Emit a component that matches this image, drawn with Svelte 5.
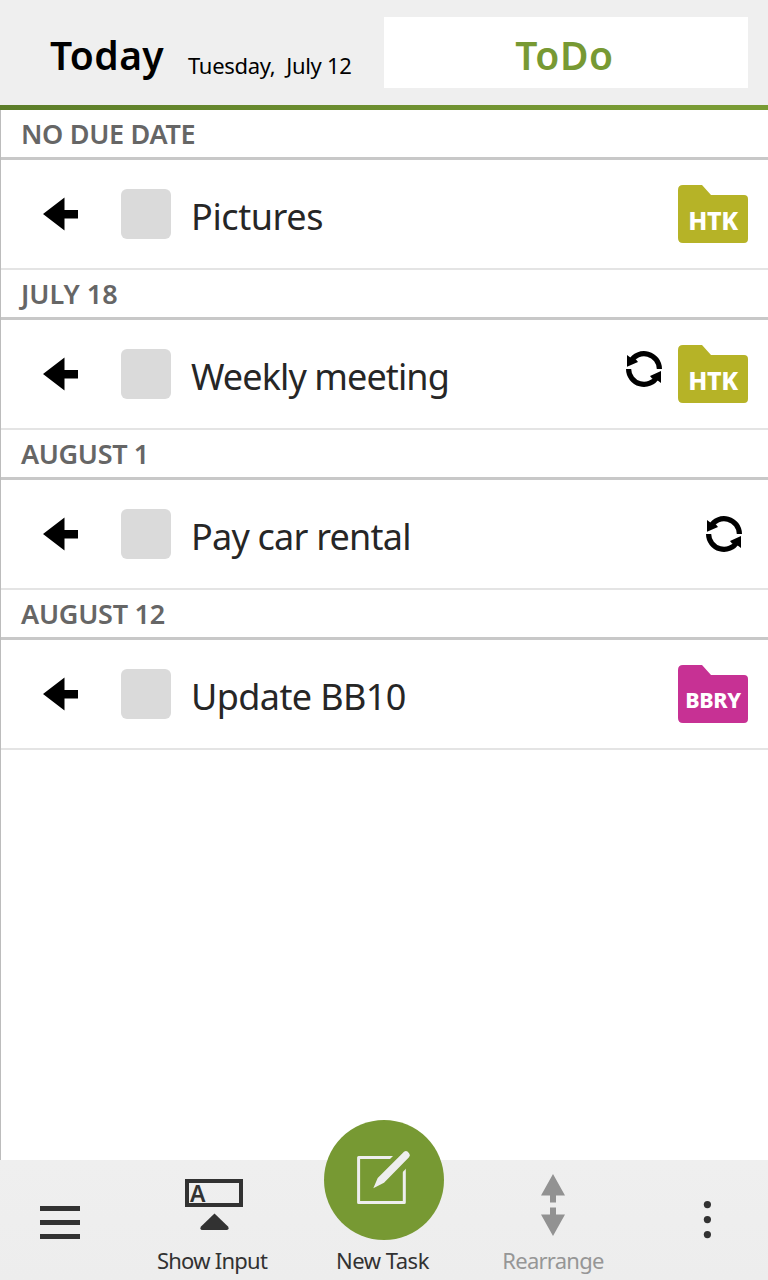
<script>
  const groups = [
    { due: 'NO DUE DATE', ls: -0.3, task: 'Pictures', tls: -0.4, tag: 'HTK', color: '#b6b327' },
    { due: 'JULY 18', ls: 0, task: 'Weekly meeting', tls: -0.9, repeat: true, raised: true, tag: 'HTK', color: '#b6b327' },
    { due: 'AUGUST 1', ls: -0.35, task: 'Pay car rental', tls: -0.78, repeat: true },
    { due: 'AUGUST 12', ls: -0.25, task: 'Update BB10', tls: -0.6, tag: 'BBRY', color: '#c73194' }
  ];
</script>

<div class="screen">
  <header>
    <div class="today"><h1>Today</h1><span class="date">Tuesday,&nbsp; July 12</span></div>
    <button class="tab">ToDo</button>
  </header>
  <main>
    {#each groups as g}
      <h2><span style="letter-spacing:{g.ls}px">{g.due}</span></h2>
      <div class="row">
        <svg class="arrow" width="36" height="34" viewBox="0 0 36 34"><path d="M0 17 21.5 0.5V13H35V21.5H21.5V33.5Z" /></svg>
        <span class="check"></span>
        <span class="task" style="letter-spacing:{g.tls}px">{g.task}</span>
        {#if g.repeat}
          <svg class="repeat" class:raised={g.raised} width="38" height="38" viewBox="0 0 38 38">
            <g fill="none" stroke="#000" stroke-width="5.2">
              <path d="M5.7 11.3A15.4 15.4 0 0 1 34.4 19" />
              <path d="M3.6 19A15.4 15.4 0 0 0 32.3 26.7" />
            </g>
            <path d="M2 5V16.8L13 12 11 9.5 6 8ZM36 33V21L25 26 27 28.5 32 30Z" />
          </svg>
        {/if}
        {#if g.tag}
          <span class="folder">
            <svg width="70" height="58" viewBox="0 0 70 58"><path fill={g.color} d="M5 0H24L33 10H66Q70 10 70 14V54Q70 58 66 58H5Q0 58 0 53V5Q0 0 5 0Z" /></svg>
            <b class:long={g.tag.length > 3}>{g.tag}</b>
          </span>
        {/if}
      </div>
    {/each}
  </main>
  <footer>
    <button class="item menu" aria-label="Menu"><svg width="40" height="33"><path d="M0 0H40V5H0ZM0 14H40V19H0ZM0 28H40V33H0Z" /></svg></button>
    <button class="item input">
      <i class="field"><b>A</b></i>
      <svg width="30" height="17" viewBox="0 0 30 17"><path d="M15.5 0.5 29 13.5Q30.7 16.8 27.7 17H3.7Q0.2 16.8 2 13.5Z" /></svg>
      <span>Show Input</span>
    </button>
    <button class="item new">
      <i class="disc"><svg width="120" height="120" viewBox="0 0 120 120">
        <path fill="none" stroke="#eee" stroke-width="3" stroke-linejoin="round" d="M69 37.5H34.6V82.5H80.3V48" />
        <path fill="#779933" d="M65 40 70 35H86V44.5L78 52.8Z" />
        <path fill="#eee" d="M49.3 68.3 53.7 58 80 31.8Q82 30 83.8 31.8L85.2 33.5Q86.8 35.2 85 37.2L60 62.8Z" />
      </svg></i>
      <span>New Task</span>
    </button>
    <button class="item rearrange">
      <svg width="24" height="62" viewBox="0 0 24 62"><path d="M12 0 24 21.5H15V28.5H9V21.5H0ZM9 33.5H15V40.5H24L12 62 0 40.5H9Z" /></svg>
      <span>Rearrange</span>
    </button>
    <button class="item more" aria-label="More"><svg width="8" height="38"><circle cx="4.4" cy="3.6" r="3.6" /><circle cx="4.4" cy="18.6" r="3.6" /><circle cx="4.4" cy="33.6" r="3.6" /></svg></button>
  </footer>
</div>

<style>
  :global(body) { margin: 0; }
  .screen { width: 768px; height: 1280px; display: flex; flex-direction: column; background: #fff; font-family: "Noto Sans", "Open Sans", sans-serif; color: #262626; overflow: hidden; }
  button { border: 0; padding: 0; margin: 0; background: none; font: inherit; color: inherit; }
  svg { display: block; flex: none; }
  h1, h2 { margin: 0; }
  header { box-sizing: border-box; height: 110px; flex: none; display: flex; align-items: flex-start; padding: 17px 20px 0 50px; background: #efefef; border-bottom: 5px solid; border-image: linear-gradient(90deg, #5c7d29, #799b34 85%) 1; }
  .today { width: 334px; height: 71px; display: flex; align-items: flex-start; color: #000; white-space: nowrap; }
  h1 { width: 138px; font-size: 39px; line-height: 75px; font-weight: 600; letter-spacing: 0.4px; }
  .date { font-size: 22px; line-height: 97px; letter-spacing: -0.3px; }
  .tab { width: 364px; height: 71px; background: #fff; color: #779933; font-size: 39px; line-height: 75px; font-weight: 600; letter-spacing: 0.6px; text-align: center; padding-right: 3px; }
  main { flex: 1; border-left: 1px solid #bcbcbc; }
  h2 { box-sizing: border-box; height: 50px; border-bottom: 3px solid #c8c8c8; padding-left: 20px; font-size: 27px; line-height: 48px; font-weight: 600; color: #666; white-space: nowrap; }
  .row { box-sizing: border-box; height: 110px; border-bottom: 2px solid #e4e4e4; display: flex; align-items: center; padding: 0 20px 0 42px; }
  .arrow { margin-right: 42px; }
  .check { width: 50px; height: 50px; border-radius: 6px; background: #dadada; margin-right: 20px; }
  .task { flex: 1; font-size: 36px; line-height: 50px; padding-top: 5px; white-space: nowrap; }
  .repeat { margin-right: 5px; }
  .repeat.raised { margin: -10px 15px 0 0; }
  .folder { display: grid; width: 70px; height: 58px; }
  .folder svg, .folder b { grid-area: 1 / 1; }
  .folder b { color: #fff; font-size: 25px; line-height: 70px; font-weight: 800; text-align: center; letter-spacing: -0.4px; }
  .folder b.long { font-size: 21.5px; }
  footer { height: 120px; flex: none; display: grid; grid-template-columns: 120px 188px 152px 186px 122px; background: linear-gradient(#efefef, #ededed); fill: #323232; color: #323232; font-size: 22px; }
  .item { display: flex; flex-direction: column; align-items: center; min-width: 0; }
  .item span { margin-top: auto; line-height: 30px; padding-bottom: 5px; white-space: nowrap; letter-spacing: -0.75px; }
  .new span { letter-spacing: -0.5px; margin-right: 3px; }
  .menu { padding-top: 46px; }
  .input { padding-top: 19px; }
  .input span { margin-right: 4px; }
  .field { box-sizing: border-box; width: 58px; height: 28px; border: 4px solid; display: flex; align-items: center; padding-left: 1px; font-style: normal; margin-bottom: 6px; }
  .field b { font-size: 23px; line-height: 20px; font-weight: 600; }
  .disc { width: 120px; height: 120px; margin-top: -40px; border-radius: 50%; background: #779933; }
  .rearrange { padding-top: 14px; color: #969696; fill: #929292; }
  .more { padding-top: 41px; }
</style>
